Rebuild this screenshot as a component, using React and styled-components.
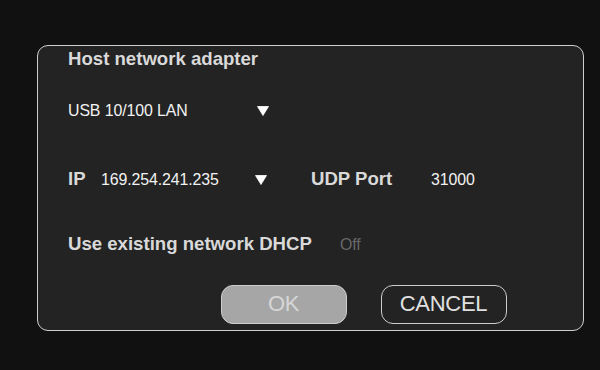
import React from "react";
import styled, { createGlobalStyle } from "styled-components";

const Global = createGlobalStyle`
  html, body {
    margin: 0;
    padding: 0;
    background: #111111;
  }
  body {
    font-family: "Liberation Sans", Arial, Helvetica, sans-serif;
  }
  * { box-sizing: border-box; }
`;

const Page = styled.div`
  width: 600px;
  height: 370px;
  padding: 45px 0 0 37px;
  background: #111111;
`;

const Dialog = styled.div`
  width: 547px;
  height: 286px;
  border: 1.5px solid #cfcfcf;
  border-radius: 11px;
  background: #232323;
  padding: 0 0 0 30px;
  display: flex;
  flex-direction: column;
`;

const Row = styled.div`
  display: flex;
  align-items: center;
  height: ${(p) => p.$h || 30}px;
  margin-top: ${(p) => p.$mt || 0}px;
  padding-left: ${(p) => p.$pl || 0}px;
  gap: ${(p) => p.$gap || 0}px;
`;

const Label = styled.span`
  font-weight: 700;
  font-size: 18.6px;
  line-height: 1;
  color: #d9d9d9;
  width: ${(p) => (p.$w ? `${p.$w}px` : "auto")};
  margin-left: ${(p) => p.$ml || 0}px;
  flex: none;
  white-space: nowrap;
`;

const Value = styled.span`
  font-size: 15.9px;
  line-height: 1;
  color: ${(p) => (p.$dim ? "#686868" : "#f2f2f2")};
  width: ${(p) => (p.$w ? `${p.$w}px` : "auto")};
  flex: none;
  white-space: nowrap;
  letter-spacing: -0.1px;
`;

const Select = styled.div`
  display: flex;
  align-items: center;
  width: ${(p) => p.$w}px;
  flex: none;
`;

const SelectText = styled(Value)`
  flex: 1;
`;

const Caret = styled.svg`
  width: 12px;
  height: 10px;
  flex: none;
  display: block;
`;

const Button = styled.button`
  width: 126px;
  height: 39px;
  border: 1.5px solid #cdcdcd;
  border-radius: 12px;
  background: ${(p) => (p.$filled ? "#a6a6a6" : "transparent")};
  color: ${(p) => (p.$filled ? "#d6d6d6" : "#e0e0e0")};
  font-family: "Liberation Sans", Arial, Helvetica, sans-serif;
  font-size: 22px;
  line-height: 1;
  padding: 0;
  display: flex;
  align-items: center;
  justify-content: center;
  cursor: pointer;
  letter-spacing: -0.3px;
`;

const Triangle = () => (
  <Caret viewBox="0 0 12 10">
    <polygon points="0.5,0.5 11.5,0.5 6,9.5" fill="#ffffff" stroke="#ffffff" strokeWidth="0.8" strokeLinejoin="round" />
  </Caret>
);

const Dropdown = ({ value, width }) => (
  <Select $w={width}>
    <SelectText>{value}</SelectText>
    <Triangle />
  </Select>
);

export default function App() {
  return (
    <>
      <Global />
      <Page>
        <Dialog>
          <Row $h={27}>
            <Label>Host network adapter</Label>
          </Row>
          <Row $mt={22.5}>
            <Dropdown value="USB 10/100 LAN" width={201} />
          </Row>
          <Row $mt={39}>
            <Label $w={33}>IP</Label>
            <Dropdown value="169.254.241.235" width={166} />
            <Label $w={120} $ml={44}>UDP Port</Label>
            <Value>31000</Value>
          </Row>
          <Row $mt={35}>
            <Label $w={272}>Use existing network DHCP</Label>
            <Value $dim>Off</Value>
          </Row>
          <Row $h={39} $mt={25} $pl={152.5} $gap={34}>
            <Button $filled>OK</Button>
            <Button>CANCEL</Button>
          </Row>
        </Dialog>
      </Page>
    </>
  );
}
